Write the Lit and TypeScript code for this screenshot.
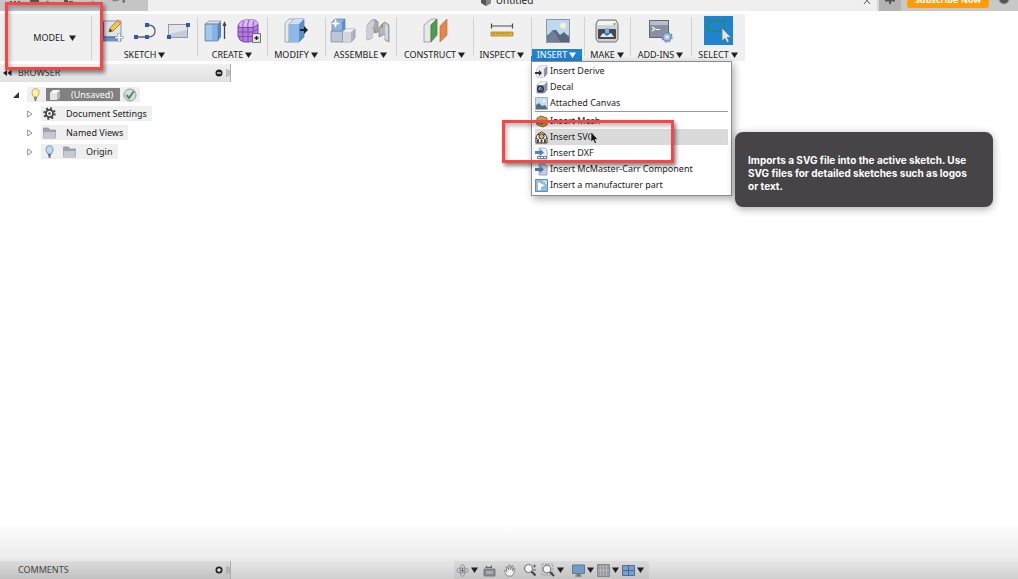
import { LitElement, html, svg, css, nothing, TemplateResult } from "lit";
import { customElement } from "lit/decorators.js";
import { classMap } from "lit/directives/class-map.js";

const icon = (w: number, h: number, body: TemplateResult, vb = `0 0 ${w} ${h}`) =>
  html`<svg width=${w} height=${h} viewBox=${vb} fill="none" aria-hidden="true">${body}</svg>`;

const caret = () => icon(7, 6, svg`<path d="M0 .5h7L3.500 6z" fill="currentColor"/>`);

const big: Record<string, () => TemplateResult> = {
  sketch: () => icon(24, 26, svg`
    <path d="M1 3h20v20H1z" fill="#dfe3ea" stroke="#8d949e"/>
    <path d="M1 15l5 4h14v4H1z" fill="#6f93c6"/><path d="M3.500 4v15M3 19h17" stroke="#4d78b8" stroke-width="1.300"/>
    <path d="M9 14l1-4 8-8 3 3-8 8z" fill="#f5cb45" stroke="#94702a" stroke-width=".8"/>
    <path d="M9 14l1-3.500 2.500 2.500z" fill="#43382a"/><path d="M17 3l3 3 1.500-1.500-3-3z" fill="#e58d72"/>
    <path d="M19 15v9M15 19.500h8.500" stroke="#8d96a3" stroke-width="3"/><path d="M19 15.500v8M15.500 19.500h7.500" stroke="#fff" stroke-width="1.600"/>`),
  line: () => icon(24, 22, svg`
    <path d="M3 17h11M14 5h2c8 1 8 11 0 12h-2" stroke="#60656d" stroke-width="1.300"/>
    <path d="M1 15h4v4H1zM12 15h4v4h-4zM12 3h4v4h-4z" fill="#3158b5"/>`),
  rect: () => icon(24, 22, svg`
    <rect x="2.500" y="4.500" width="19" height="13" fill="#c6ccd7" stroke="#9299a5"/>
    <path d="M3 5h18v5L3 14z" fill="#e2e6ec"/><path d="M1 15h4v4H1zM20 3h4v4h-4z" fill="#3158b5"/>`),
  extrude: () => icon(24, 26, svg`
    <path d="M2 6l4-3h12l-3 3z" fill="#dde2e8" stroke="#858d98" stroke-width=".7"/>
    <path d="M2 6h13v17H2z" fill="#86b3e4" stroke="#6583a8" stroke-width=".7"/>
    <path d="M15 6l3-3v16l-3 4z" fill="#5585bf"/><path d="M3 7h6v15H3z" fill="#a3c8ee"/>
    <path d="M21.500 21V5" stroke="#444" stroke-width="1.300"/><path d="M19.500 8l2-5 2 5z" fill="#444"/>`),
  form: () => icon(26, 26, svg`
    <path d="M3 6q2-4 6-4h8q5 0 5 5v12q-4 5-9 5H8q-5-1-6-6V8z" fill="#b57be3" stroke="#7a48a8"/>
    <path d="M3 7q2-5 7-5h7q4 0 5 4l-4 3H4z" fill="#dcb4f7"/>
    <path d="M8 3Q6 6 7 10v13M13 2q-2 4-1 8v14M18 3q-1 3-1 6v14M2 9.500h15l5-3M2 14h15l5-3M2 18.500h15l5-3" stroke="#70409f" stroke-width=".8"/>
    <path d="M16.500 15.500h8v9h-8z" fill="#e4e4e4" stroke="#555" stroke-width=".8"/><path d="M18.500 20h4M20.500 18v4" stroke="#222" stroke-width="1.400"/>`),
  modify: () => icon(26, 26, svg`
    <path d="M2 5l4-4h5L7 5v19H2z" fill="#e7eaed" stroke="#8b929b" stroke-width=".7"/>
    <path d="M6 6l5-5h10v18l-5 5H6z" fill="#5d90cb" stroke="#5679a0" stroke-width=".7"/>
    <path d="M6 6h10v18H6z" fill="#8db9e8"/><path d="M6 6l5-5h10l-5 5z" fill="#cfe0f2"/>
    <path d="M17 11h4V8l4 4-4 4v-3h-4z" fill="#252525"/>`),
  component: () => icon(26, 26, svg`
    <path d="M1 13h12v11H1z" fill="#bcc6d4" stroke="#7f8997" stroke-width=".7"/>
    <path d="M2 4l3-3h10v10l-3 2H2z" fill="#8db4e4" stroke="#6583ad" stroke-width=".7"/><path d="M12 4l3-3v10l-3 2z" fill="#5e8cc6"/>
    <path d="M13 14l3-3h9v9l-4 4h-8z" fill="#aeb5bf" stroke="#808792" stroke-width=".7"/><path d="M13 14h8v10h-8z" fill="#d2d7de"/><path d="M13 14l3-3h9l-4 3z" fill="#eceef0"/>
    <path d="M5.500 1v9M1 5.500h9" stroke="#8795a8" stroke-width="3.200"/><path d="M5.500 1.500v8M1.500 5.500h8" stroke="#fff" stroke-width="2"/>`),
  joint: () => icon(26, 26, svg`
    <path d="M2 8q4-8 9-6l2 2v10l-4 1V9L7 11v9l-5 2z" fill="#a5adb7" stroke="#747d88" stroke-width=".7"/>
    <path d="M2 8q3-6 7-6v6L7 11v9l-5 2z" fill="#cbd0d7"/>
    <path d="M14 10q2-4 6-6l4 3v17l-4-2v-6l-6 3z" fill="#b0b7c0" stroke="#747d88" stroke-width=".7"/><path d="M20 5l3 3v15l-3-2z" fill="#d3d7dc"/>
    <path d="M9 12l2 2M17 6v4" stroke="#e57a34" stroke-width="1.600"/>`),
  plane: () => icon(26, 26, svg`
    <path d="M2 7l7-6h6L9 7v17H2z" fill="#e6e8ea" stroke="#858b91" stroke-width=".7"/>
    <path d="M9 7l6-6v16l-6 7z" fill="#4e9c4d" stroke="#4d774b" stroke-width=".7"/><path d="M18 8l7-7v16l-7 7z" fill="#e98349" stroke="#b46a44" stroke-width=".6"/>`),
  inspect: () => icon(24, 24, svg`
    <path d="M1 7h22M1.500 4.500v5M22.500 4.500v5" stroke="#4b4b4b" stroke-width="1.200"/>
    <path d="M1 13h22v4H1z" fill="#e8b42c" stroke="#9c7827" stroke-width=".7"/><path d="M4 14v1M7 14v1M10 14v1M13 14v1M16 14v1M19 14v1" stroke="#7f5e12"/>`),
  image: () => icon(24, 24, svg`
    <rect x=".5" y=".5" width="23" height="23" fill="#bed9ee" stroke="#8c98a3"/>
    <path d="M1 16h22v7H1z" fill="#8793a2"/><circle cx="17" cy="6.500" r="2.800" fill="#fff5bd"/>
    <path d="M1 17l6-6h3l4 5 4-3 5 5v5H1z" fill="#59677a"/><path d="M1 19l6-8 3 4 4 8H1z" fill="#707f92"/>`),
  make: () => icon(26, 24, svg`
    <path d="M4 1h18l2 4v15l-2 3H4l-2-3V5z" fill="#d0d1d3" stroke="#737577"/>
    <path d="M4.500 2h17l1.500 4H3z" fill="#f4f4f4"/><rect x="4" y="10" width="18" height="10" rx="1" fill="#45484c"/>
    <path d="M6 18l3-4h8l3 4z" fill="#e3e7ec"/><path d="M11 9h4v6h-4z" fill="#78aee5"/><path d="M9 14h8l-4 3z" fill="#4279b5"/><circle cx="20.500" cy="5" r="1" fill="#44a04a"/>`),
  addins: () => icon(26, 24, svg`
    <rect x="1.500" y="1.500" width="19" height="17" fill="#8991a1" stroke="#606878"/><path d="M2 2h18v4H2z" fill="#b9bec8"/>
    <path d="M4 8l3 2-3 2M8 10.500h4" stroke="#fff" stroke-width="1.100"/>
    <circle cx="19" cy="18" r="4.200" fill="#a6bfdf" stroke="#5c7eac"/><circle cx="19" cy="18" r="4.800" stroke="#6f91bf" stroke-width="1.800" stroke-dasharray="2 1.770"/><circle cx="19" cy="18" r="1.600" fill="#eee"/>`),
  select: () => icon(29, 29, svg`
    <path d="M0 0h29v29H0z" fill="#2083d0"/><rect x="4" y="5" width="16" height="10" stroke="#228c68" stroke-width="1.500"/>
    <path d="M18 12v13l3-2.500 2 4 2.200-1-2-4h3.800z" fill="#dceaf7" stroke="#66717c" stroke-width=".8"/>`),
};

const cube = (front: string) => svg`<path d="M2 4l3-3h7v8l-3 3H2z" fill="#8c96a8" stroke="#7d8593" stroke-width=".7"/><path d="M2 4h7v8H2z" fill="${front}"/><path d="M2 4l3-3h7L9 4z" fill="#eef0f3"/>`;
const small: Record<string, () => TemplateResult> = {
  derive: () => icon(13, 13, svg`${cube("#e8eaef")}<path d="M0 7h4V5l3 3-3 3V9H0z" fill="#333"/>`),
  decal: () => icon(13, 13, svg`${cube("#6f93c6")}<circle cx="5.500" cy="8" r="3.500" fill="#26374f"/><path d="M4 9q0-3 2-2.500M6 9.500q2-1 0-2" stroke="#e8edf4" stroke-width=".9"/>`),
  canvas: () => icon(13, 13, svg`<path d="M.5.500h12v12H.5z" fill="#c5dff0" stroke="#a4b3bf"/><path d="M1 8l3-2 3 3 3-1 2 3v1H1z" fill="#536b83"/><circle cx="9" cy="4" r="1.300" fill="#fff"/>`),
  mesh: () => icon(13, 13, svg`<path d="M2 3l4-2 6 2v7l-4 2-6-2z" fill="#cf9e34" stroke="#896b2c"/><path d="M1 6h5V4l4 3-4 3.500V9H1z" fill="#5579a5"/>`),
  svgfile: () => icon(13, 13, svg`<path d="M1 12V6l2-3 3.500-2L10 3l2 3v6z" fill="#fff" stroke="#3c352e"/><circle cx="6.500" cy="5.500" r="2.600" fill="#e7b468" stroke="#30281f"/><path d="M1 7l3 2M12 7L9 9M3 3l1.500 1.500M10 3L8.500 4.500" stroke="#3c352e"/><path d="M2 9h2v3H2zM5.500 9h2v3h-2zM9 9h2v3H9z" fill="#57493c"/>`),
  dxf: () => icon(13, 13, svg`<path d="M4 1h6l2 2v9H4z" fill="#edf0f5" stroke="#98a1ae" stroke-width=".8"/><path d="M0 4h5V2l4 3.500L5 9V7H0z" fill="#507fd0"/><path d="M2 9h10v3H2z" fill="#75859b"/><path d="M3 10.500h8" stroke="#fff" stroke-dasharray="2 1"/>`),
  mcm: () => icon(13, 13, svg`<path d="M4 1h6l2 2v9H4z" fill="#c4ccd9" stroke="#8e97a6" stroke-width=".8"/><path d="M0 5h5V3l4 3.500L5 10V8H0z" fill="#4a74c2"/>`),
  part: () => icon(13, 13, svg`<path d="M.5.500h12v12H.5z" fill="#8dbddc" stroke="#5f8fae"/><path d="M3 3l7 3.500-4 1.500v3L3 11z" fill="#fff"/><path d="M8 2h3v3" stroke="#fff"/>`),
  bulb: () => icon(9, 13, svg`<path d="M3 9Q1 7 1 4.500C1 2 2.500.7 4.500.7S8 2 8 4.500Q8 7 6 9z" fill="#fff2a0" stroke="#b69744" stroke-width=".8"/><path d="M3 10h3M3.500 12h2" stroke="#666" stroke-width="1.400"/>`),
  bulbBlue: () => icon(9, 13, svg`<path d="M3 9Q1 7 1 4.500C1 2 2.500.7 4.500.7S8 2 8 4.500Q8 7 6 9z" fill="#b9dcf5" stroke="#5b84a7" stroke-width=".8"/><path d="M3 10h3M3.500 12h2" stroke="#555" stroke-width="1.400"/>`),
  body: () => icon(12, 12, svg`<path d="M1 4l3-3h7v8l-3 2H1z" fill="#b5b5b5"/><path d="M1 4h7v7H1z" fill="#e4e4e4"/><path d="M1 4l3-3h7L8 4z" fill="#fafafa"/>`),
  check: () => icon(14, 14, svg`<circle cx="7" cy="7" r="6" fill="#d7dce5" stroke="#8f98a8"/><path d="M3.500 7l2.500 3 5-7" stroke="#4e963c" stroke-width="2"/>`),
  gear: () => icon(13, 13, svg`<circle cx="6.500" cy="6.500" r="5.200" stroke="#444" stroke-width="2" stroke-dasharray="2 2.080"/><circle cx="6.500" cy="6.500" r="3.600" stroke="#444" stroke-width="1.800"/><circle cx="6.500" cy="6.500" r="1.200" fill="#444"/>`),
  folder: () => icon(13, 12, svg`<path d="M.5 1h5l1 2h6v8H.5z" fill="#9fa4b0" stroke="#858a96" stroke-width=".7"/><path d="M.5 5h12v6H.5z" fill="#c3c8d3"/>`),
  closed: () => icon(6, 8, svg`<path d="M.7 1L5 4 .7 7z" fill="#fff" stroke="#777" stroke-width=".8"/>`),
  open: () => icon(6, 6, svg`<path d="M6 0v6H0z" fill="#333"/>`),
};

const nav: Record<string, () => TemplateResult> = {
  orbit: () => icon(13, 13, svg`<ellipse cx="6.500" cy="6.500" rx="6" ry="2.500" stroke="#8b929c"/><ellipse cx="6.500" cy="6.500" rx="2.500" ry="6" stroke="#8b929c"/><path d="M6.500 4v5M4 6.500h5" stroke="#69727f"/>`),
  look: () => icon(13, 13, svg`<path d="M1 5h11v7H1z" fill="#85898f" stroke="#777c83"/><path d="M2 4l2-3v2h3l2-2v3z" fill="#62666b"/><path d="M3 7h7v3H3z" fill="#a9adb2"/>`),
  pan: () => icon(13, 13, svg`<path d="M4 12L1 7l1-1 2 2-1-5 1-.5L5.500 6 6 1h1l.5 5L9 1.500l1 .3L9.500 7 11 4l1 .5-1.500 5L9 12z" fill="#f3f3f3" stroke="#777" stroke-width=".8"/>`),
  zoom: () => icon(13, 14, svg`<circle cx="5.500" cy="5.500" r="4" fill="#f1f3f5" stroke="#7a7f86" stroke-width="1.200"/><path d="M8.500 8.500l4 4" stroke="#3f3f3f" stroke-width="2"/><path d="M10 3h3M11.500 1.500v3M10 7h3" stroke="#555" stroke-width=".9"/>`),
  fit: () => icon(14, 14, svg`<path d="M1 1h11v11H1z" stroke="#909398" stroke-width=".8" stroke-dasharray="2 1"/><circle cx="6" cy="6" r="3.800" fill="#f1f3f5" stroke="#7a7f86" stroke-width="1.200"/><path d="M9 9l4 4" stroke="#3f3f3f" stroke-width="2"/>`),
  display: () => icon(13, 13, svg`<path d="M.5 1h12v8.500H.5z" fill="#719bcb" stroke="#657789"/><path d="M5 10h3v2H5zM3 12h7" fill="#777" stroke="#777"/>`),
  grid: () => icon(13, 13, svg`<path d="M.5.500h12v12H.5z" fill="#9a9da2" stroke="#888"/><path d="M3.500 1v11M6.500 1v11M9.500 1v11M1 6.500h11" stroke="#b8bbc0" stroke-width=".8"/>`),
  views: () => icon(13, 13, svg`<path d="M.5 1.500h12v10H.5z" fill="#779fd0" stroke="#4e6e98"/><path d="M6.500 1v10M1 6.500h11" stroke="#46658f"/>`),
};

interface Group { label: string; icons: string[]; active?: boolean }
const GROUPS: Group[] = [
  { label: "SKETCH", icons: ["sketch", "line", "rect"] },
  { label: "CREATE", icons: ["extrude", "form"] },
  { label: "MODIFY", icons: ["modify"] },
  { label: "ASSEMBLE", icons: ["component", "joint"] },
  { label: "CONSTRUCT", icons: ["plane"] },
  { label: "INSPECT", icons: ["inspect"] },
  { label: "INSERT", icons: ["image"], active: true },
  { label: "MAKE", icons: ["make"] },
  { label: "ADD-INS", icons: ["addins"] },
  { label: "SELECT", icons: ["select"] },
];

const MENU: Array<[string, string] | null> = [
  ["derive", "Insert Derive"], ["decal", "Decal"], ["canvas", "Attached Canvas"], null,
  ["mesh", "Insert Mesh"], ["svgfile", "Insert SVG"], ["dxf", "Insert DXF"],
  ["mcm", "Insert McMaster-Carr Component"], ["part", "Insert a manufacturer part"],
];

type Tool = [string, string, boolean];
const NAV: Tool[][] = [
  [["orbit", "Orbit", true], ["look", "Look at", false], ["pan", "Pan", false], ["zoom", "Zoom", false], ["fit", "Fit", true]],
  [["display", "Display settings", true], ["grid", "Grid and snaps", true], ["views", "Viewports", true]],
];

@customElement("app-root")
export class AppRoot extends LitElement {
  static styles = css`
    :host { display: flex; flex-direction: column; position: relative; height: 100vh; overflow: hidden;
      background: linear-gradient(to top, #cfcfcf 0, #ececec 22px, #fff 56px) #fff;
      font: 9px/12px "Noto Sans", sans-serif; color: #222; }
    * { box-sizing: border-box; }
    svg { display: block; flex: none; }
    button { font: inherit; color: inherit; background: none; border: 0; margin: 0; padding: 0; display: flex; align-items: center; }

    .tabs { display: flex; height: 11px; overflow: hidden; background: #efefef; flex: none; }
    .quick { width: 148px; background: #c5c5c5; padding: 0 8px; color: #444; }
    .doc { flex: 1; display: flex; align-items: flex-end; justify-content: center; gap: 4px; padding: 0 0 5px 8px; font-size: 10px; }
    .close { width: 20px; justify-content: center; align-items: flex-start; }
    .plus { width: 24px; background: #b3b3b3; justify-content: center; align-items: flex-start; border-left: 2px solid #d9d9d9; }
    .account { width: 117px; background: #c8c8c8; display: flex; align-items: flex-start; gap: 9px; padding-left: 6px; }
    .subscribe { width: 82px; height: 8px; background: #ff9c0b; color: #fff; border-radius: 0 0 3px 3px; justify-content: center; align-items: flex-end; padding-bottom: 2px; font-weight: 700; }

    .ribbon { display: grid; grid-template-columns: 92px 105px 70px 58px 71px 77px 58px 53px 46px 61px 54px; width: max-content; height: 47px; margin-top: 3px; background: #f0f0f0; flex: none; }
    .mode { display: flex; align-items: center; justify-content: center; gap: 4px; border-right: 1px solid #cfcfcf; margin: 2px 0; padding-left: 18px; }
    .group { position: relative; display: grid; grid-template-rows: 33px 12px; row-gap: 2px; }
    .group + .group::before { content: ""; position: absolute; left: 0; top: 3px; bottom: 5px; width: 1px; background: #d3d3d3; }
    .icons { display: flex; align-items: center; justify-content: center; gap: 9px; }
    .label { justify-content: center; gap: 2px; white-space: nowrap; }
    .label.active { background: #2083d0; color: #fff; margin-right: 2px; }

    .panel { width: 231px; height: 18px; display: flex; align-items: center; color: #444; background: linear-gradient(#f0f0f0, #e0e0e0); border-right: 1px solid #aaa; padding-left: 3px; }
    .panel .name { flex: 1; }
    .panel .collapse { width: 15px; }
    .panel .round { margin-right: 3px; }
    .browser { margin-top: 3px; flex: 1; }
    .tree { list-style: none; margin: 0; padding: 5px 0 0 13px; display: flex; flex-direction: column; gap: 4px; align-items: flex-start; }
    .row { display: flex; align-items: center; height: 15px; }
    .row.child { padding-left: 14px; }
    .twist { width: 14px; }
    .cell { display: flex; align-items: center; height: 15px; background: #efefef; padding: 0 5px 0 2px; gap: 10px; }
    .cell.top { padding: 0 3px 0 4px; gap: 3px; }
    .cell .pair { display: flex; align-items: center; gap: 9px; padding-left: 2px; }
    .pick { display: flex; align-items: center; gap: 10px; height: 13px; background: #818181; color: #fff; padding: 0 7px 0 3px; margin-left: 3px; }

    .menu { position: absolute; left: 0; top: 47px; width: 201px; padding: 1px 3px 2px; background: #fff; border: 1px solid #8d8d8d; box-shadow: 2px 3px 8px #0005; z-index: 2; }
    .item { width: 100%; height: 16px; gap: 2px; white-space: nowrap; text-align: left; }
    .item.hot { background: #dadada; }
    .menu hr { border: 0; border-top: 1px solid #999; margin: 0 0 1px; }
    .cursor { position: absolute; left: 590px; top: 131px; z-index: 5; }
    .tip { position: absolute; left: 735px; top: 132px; width: 258px; padding: 22px 18px 14px 13px; border-radius: 8px; background: #464446; color: #fff; font: 700 10px/13px Inter, sans-serif; box-shadow: 0 2px 8px #0005; z-index: 3; }
    .mark { position: absolute; border: 3px solid #f74646; box-shadow: 2px 3px 4px #0007, inset 2px 3px 4px #0004; z-index: 4; pointer-events: none; }
    .mark.mode-mark { left: 5px; top: 2px; width: 98px; height: 68px; }
    .mark.svg-mark { left: 502px; top: 120px; width: 172px; height: 43px; }

    .bottom { display: flex; gap: 223px; flex: none; }
    .bottom .panel { background: linear-gradient(#dcdcdc, #c0c0c0); }
    .nav { display: flex; align-items: center; gap: 8px; background: #0000000d; padding: 0 5px 0 2px; }
    .tools { display: flex; align-items: center; gap: 3px; }
    .tools button { gap: 2px; }
    .tools .plain { padding: 0 2px; }
  `;

  private round(plus: boolean) {
    return html`<button class="round" aria-label=${plus ? "Expand" : "Collapse"}>${icon(8, 8, svg`<circle cx="4" cy="4" r="3.500" fill="#222"/><path d="M2 4h4" stroke="#fff" stroke-width="1.200"/>${plus ? svg`<path d="M4 2v4" stroke="#fff" stroke-width="1.200"/>` : nothing}`)}</button>
      ${icon(4, 10, svg`<path d="M1 1v8M3 2v6" stroke="#999"/>`)}`;
  }

  private menu() {
    return html`<div class="menu" role="menu">${MENU.map((m) => m === null ? html`<hr>` :
      html`<button role="menuitem" class=${classMap({ item: true, hot: m[0] === "svgfile" })}>${small[m[0]]()}${m[1]}</button>`)}</div>`;
  }

  render() {
    return html`
      <header class="tabs">
        <div class="quick">${icon(130, 8, svg`<path d="M2 1h2v1H2zM6 1h2v1H6zM10 1h2v1h-2zM22 0h9v4h-9zM56 0h4v3h-4zM61 1h4v2h-4zM38 0l2 2zM114 1l2-1v3z" fill="#555"/><path d="M38 1l3 1M84 1l3 2M105 0v1l6-1M116 3l1-3" stroke="#777"/>`)}</div>
        <div class="doc">${icon(12, 12, svg`<path d="M1 3l5-2 5 2v6l-5 3-5-3z" fill="#555"/><path d="M6 5l5-2v6l-5 3z" fill="#888"/>`)}<span>Untitled</span></div>
        <button class="close" aria-label="Close tab">${icon(8, 6, svg`<path d="M1 4l6-7M1-3l6 7" stroke="#555"/>`)}</button>
        <button class="plus" aria-label="New tab">${icon(12, 6, svg`<path d="M1 .5h10M6-3v7" stroke="#555" stroke-width="2"/>`)}</button>
        <div class="account"><button class="subscribe">Subscribe Now</button>${icon(12, 6, svg`<circle cx="6" cy="-1" r="5" fill="#555" stroke="#999"/>`)}</div>
      </header>
      <nav class="ribbon">
        <button class="mode">MODEL ${caret()}</button>
        ${GROUPS.map((g) => html`<div class="group">
          <div class="icons">${g.icons.map((n) => big[n]())}</div>
          <button class=${classMap({ label: true, active: !!g.active })}>${g.label}${caret()}</button>
          ${g.active ? this.menu() : nothing}
        </div>`)}
      </nav>
      <main class="browser">
        <div class="panel"><button class="collapse" aria-label="Hide browser">${icon(9, 6, svg`<path d="M4 0v6L0 3zM8.500 0v6l-4-3z" fill="#222"/>`)}</button><span class="name">BROWSER</span>${this.round(false)}</div>
        <ul class="tree">
          <li class="row root"><span class="twist">${small.open()}</span><div class="cell top">${small.bulb()}<span class="pick">${small.body()}<span>(Unsaved)</span></span>${small.check()}</div></li>
          <li class="row child"><span class="twist">${small.closed()}</span><div class="cell">${small.gear()}Document Settings</div></li>
          <li class="row child"><span class="twist">${small.closed()}</span><div class="cell">${small.folder()}Named Views</div></li>
          <li class="row child"><span class="twist">${small.closed()}</span><div class="cell"><span class="pair">${small.bulbBlue()}${small.folder()}</span>Origin</div></li>
        </ul>
      </main>
      <footer class="bottom">
        <div class="panel"><span class="collapse"></span><span class="name">COMMENTS</span>${this.round(true)}</div>
        <div class="nav">${NAV.map((set) => html`<div class="tools">${set.map(([n, label, drop]) =>
          html`<button class=${classMap({ plain: !drop })} aria-label=${label}>${nav[n]()}${drop ? caret() : nothing}</button>`)}</div>`)}</div>
      </footer>
      <div class="tip" role="tooltip">Imports a SVG file into the active sketch. Use SVG files for detailed sketches such as logos or text.</div>
      <div class="mark mode-mark"></div>
      <div class="mark svg-mark"></div>
      <div class="cursor">${icon(9, 13, svg`<path d="M1 1v10l2.200-2 1.600 3.500 1.700-.8L5 8.500h3z" fill="#111" stroke="#eee" stroke-width=".6"/>`)}</div>
    `;
  }
}
